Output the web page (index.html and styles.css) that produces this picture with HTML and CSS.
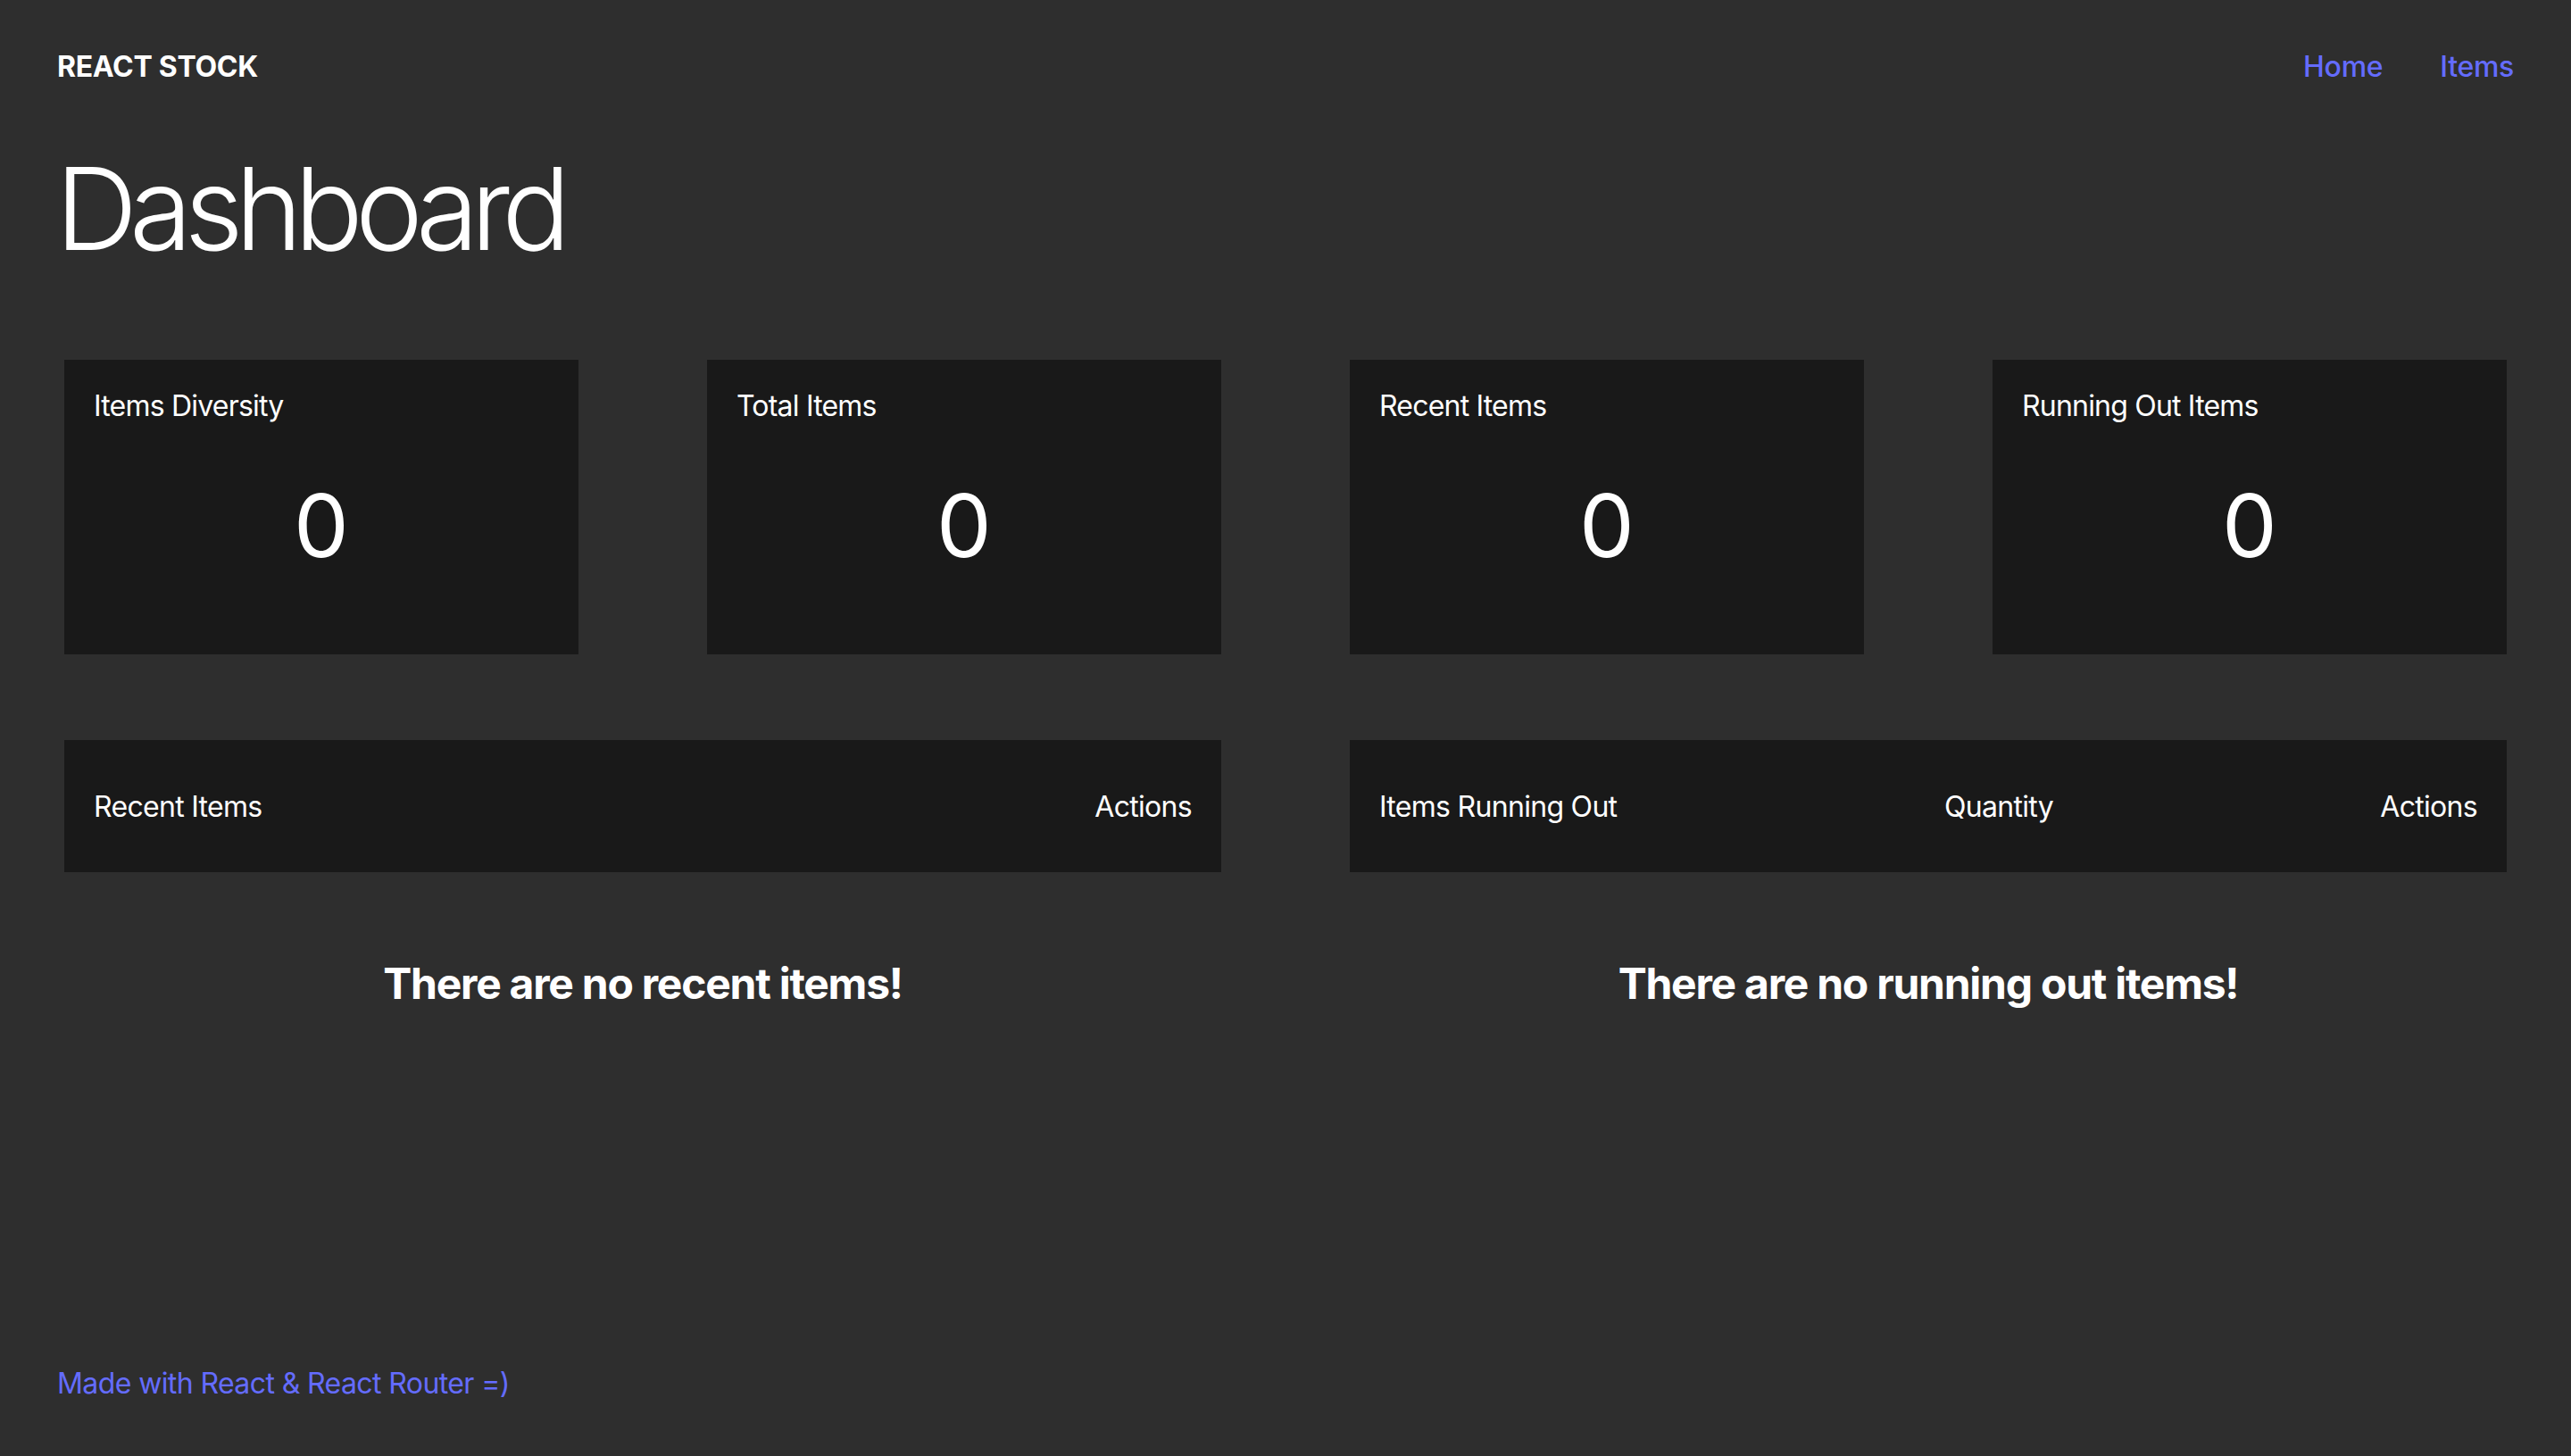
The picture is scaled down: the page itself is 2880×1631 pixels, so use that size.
FILE: index.html
```html
<!DOCTYPE html>
<html lang="en">
<head>
<meta charset="UTF-8">
<title>React Stock</title>
<link rel="stylesheet" href="styles.css">
</head>
<body>
<div class="app">
  <header class="topbar">
    <a class="brand" href="#">REACT STOCK</a>
    <nav class="nav">
      <a href="#">Home</a>
      <a href="#">Items</a>
    </nav>
  </header>
  <main class="main">
    <h1 class="title">Dashboard</h1>
    <section class="cards">
      <div class="card"><div class="card-title">Items Diversity</div><div class="card-value">0</div></div>
      <div class="card"><div class="card-title">Total Items</div><div class="card-value">0</div></div>
      <div class="card"><div class="card-title">Recent Items</div><div class="card-value">0</div></div>
      <div class="card"><div class="card-title">Running Out Items</div><div class="card-value">0</div></div>
    </section>
    <section class="tables">
      <div class="table-block">
        <div class="thead thead-two">
          <span>Recent Items</span>
          <span>Actions</span>
        </div>
        <h2 class="empty">There are no recent items!</h2>
      </div>
      <div class="table-block">
        <div class="thead thead-three">
          <span>Items Running Out</span>
          <span>Quantity</span>
          <span>Actions</span>
        </div>
        <h2 class="empty">There are no running out items!</h2>
      </div>
    </section>
  </main>
  <footer class="footer">
    <a href="#">Made with React &amp; React Router =)</a>
  </footer>
</div>
</body>
</html>
```
FILE: styles.css
```css
* { box-sizing: border-box; }
html, body { margin: 0; padding: 0; }
body {
  background: #2e2e2e;
  color: #ffffff;
  font-family: Inter, "Noto Sans", "Liberation Sans", sans-serif;
  -webkit-font-smoothing: antialiased;
}
a { text-decoration: none; }
.app {
  min-height: 100vh;
  display: flex;
  flex-direction: column;
  padding: 0 64px;
}
.topbar {
  height: 148px;
  display: flex;
  align-items: center;
  justify-content: space-between;
}
.brand {
  color: #ffffff;
  font-size: 32px;
  font-weight: 700;
  letter-spacing: -0.3px;
}
.nav { display: flex; gap: 64px; }
.nav a {
  color: #646cff;
  font-size: 32px;
  font-weight: 500;
  letter-spacing: -0.3px;
}
.title {
  margin: 15px 0 0 -2px;
  font-size: 128px;
  line-height: 141px;
  font-weight: 300;
  letter-spacing: -9px;
}
.cards {
  margin-top: 99px;
  padding: 0 8px;
  display: grid;
  grid-template-columns: repeat(4, 576px);
  justify-content: space-between;
}
.card {
  height: 330px;
  background: #191919;
  padding: 32px 33px;
  display: flex;
  flex-direction: column;
}
.card-title {
  font-size: 32px;
  line-height: 40px;
  letter-spacing: -0.8px;
}
.card-value {
  flex: 1;
  display: flex;
  align-items: center;
  justify-content: center;
  font-size: 98px;
  font-weight: 400;
}
.tables {
  margin-top: 96px;
  padding: 0 8px;
  display: grid;
  grid-template-columns: repeat(2, 1296px);
  justify-content: space-between;
}
.thead {
  height: 148px;
  background: #191919;
  padding: 0 33px;
  display: grid;
  align-items: center;
  font-size: 32px;
  letter-spacing: -0.7px;
}
.thead-two { grid-template-columns: 1fr auto; }
.thead-three { grid-template-columns: 633px 1fr auto; }
.empty {
  margin: 96px 0 0;
  text-align: center;
  font-size: 48px;
  line-height: 58px;
  font-weight: 700;
  letter-spacing: -1.25px;
}
.footer {
  margin-top: auto;
  height: 164px;
  display: flex;
  align-items: center;
}
.footer a {
  color: #646cff;
  font-size: 32px;
  letter-spacing: -0.6px;
}
```
